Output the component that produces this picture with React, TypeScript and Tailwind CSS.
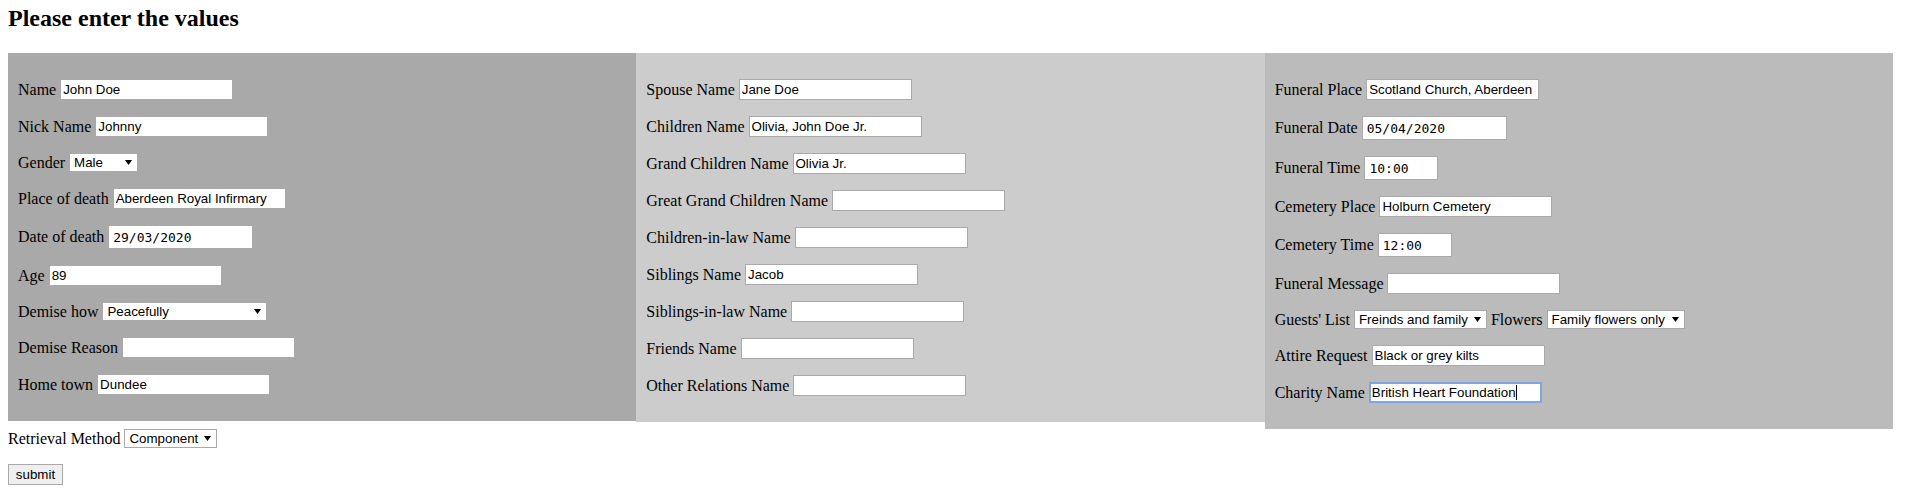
import React from 'react';

type Field =
  | { kind: 'text'; label: string; value?: string }
  | { kind: 'date'; label: string; value: string }
  | { kind: 'time'; label: string; value: string }
  | { kind: 'select'; label: string; value: string; w: string };

const sans = "font-['Liberation_Sans',Arial,sans-serif] text-[13.33px] text-black";
const mono = "font-['DejaVu_Sans_Mono','Liberation_Mono',monospace] text-[13px] text-black";
const box = 'border border-[#a9a9a9] bg-white outline-none';

function Select({ value, w, options }: { value: string; w: string; options?: string[] }) {
  const opts = options ?? [value];
  return (
    <span className="relative inline-flex">
      <select
        defaultValue={value}
        className={`${box} ${sans} ${w} h-[19px] appearance-none pl-[4px] pr-[16px] leading-[17px]`}
      >
        {opts.map((o) => (
          <option key={o}>{o}</option>
        ))}
      </select>
      <svg
        className="pointer-events-none absolute right-[6px] top-[7px]"
        width="7"
        height="5"
        viewBox="0 0 7 5"
      >
        <path d="M0 0H7L3.5 5Z" fill="#000" />
      </svg>
    </span>
  );
}

function Row({ field }: { field: Field }) {
  if (field.kind === 'select') {
    return (
      <div className="flex h-[19px] items-center gap-[4px]">
        <span>{field.label}</span>
        <Select value={field.value} w={field.w} />
      </div>
    );
  }
  if (field.kind === 'date' || field.kind === 'time') {
    return (
      <div className="flex h-[24px] items-center gap-[4px]">
        <span>{field.label}</span>
        <input
          type="text"
          defaultValue={field.value}
          className={`${box} ${mono} h-[24px] pl-[4px] ${field.kind === 'date' ? 'w-[145px]' : 'w-[74px]'}`}
        />
      </div>
    );
  }
  return (
    <div className="flex h-[21px] items-center gap-[4px]">
      <span>{field.label}</span>
      <input
        type="text"
        defaultValue={field.value ?? ''}
        className={`${box} ${sans} h-[21px] w-[173px] px-[2px]`}
      />
    </div>
  );
}

const personal: Field[] = [
  { kind: 'text', label: 'Name', value: 'John Doe' },
  { kind: 'text', label: 'Nick Name', value: 'Johnny' },
  { kind: 'select', label: 'Gender', value: 'Male', w: 'w-[69px]' },
  { kind: 'text', label: 'Place of death', value: 'Aberdeen Royal Infirmary' },
  { kind: 'date', label: 'Date of death', value: '29/03/2020' },
  { kind: 'text', label: 'Age', value: '89' },
  { kind: 'select', label: 'Demise how', value: 'Peacefully', w: 'w-[165px]' },
  { kind: 'text', label: 'Demise Reason' },
  { kind: 'text', label: 'Home town', value: 'Dundee' },
];

const family: Field[] = [
  { kind: 'text', label: 'Spouse Name', value: 'Jane Doe' },
  { kind: 'text', label: 'Children Name', value: 'Olivia, John Doe Jr.' },
  { kind: 'text', label: 'Grand Children Name', value: 'Olivia Jr.' },
  { kind: 'text', label: 'Great Grand Children Name' },
  { kind: 'text', label: 'Children-in-law Name' },
  { kind: 'text', label: 'Siblings Name', value: 'Jacob' },
  { kind: 'text', label: 'Siblings-in-law Name' },
  { kind: 'text', label: 'Friends Name' },
  { kind: 'text', label: 'Other Relations Name' },
];

const funeral: Field[] = [
  { kind: 'text', label: 'Funeral Place', value: 'Scotland Church, Aberdeen' },
  { kind: 'date', label: 'Funeral Date', value: '05/04/2020' },
  { kind: 'time', label: 'Funeral Time', value: '10:00' },
  { kind: 'text', label: 'Cemetery Place', value: 'Holburn Cemetery' },
  { kind: 'time', label: 'Cemetery Time', value: '12:00' },
  { kind: 'text', label: 'Funeral Message' },
];

export default function App() {
  return (
    <div className="px-[8px] font-['Liberation_Serif','Times_New_Roman',serif] text-[16px] text-black">
      <h2 className="mt-[5px] mb-[21px] text-[24px] font-bold leading-[27px]">Please enter the values</h2>

      <div className="flex items-start">
        {/* Deceased */}
        <div className="flex w-[33%] flex-col gap-4 bg-[#a9a9a9] px-[10px] py-[26px]">
          {personal.map((f) => (
            <Row key={f.label} field={f} />
          ))}
        </div>

        {/* Relations */}
        <div className="flex w-[33%] flex-col gap-4 bg-[#cccccc] px-[10px] py-[26px]">
          {family.map((f) => (
            <Row key={f.label} field={f} />
          ))}
        </div>

        {/* Funeral details */}
        <div className="flex w-[33%] flex-col gap-4 bg-[#bbbbbb] px-[10px] py-[26px]">
          {funeral.map((f) => (
            <Row key={f.label} field={f} />
          ))}
          <div className="flex h-[19px] items-center gap-[4px]">
            <span>Guests' List</span>
            <Select value="Freinds and family" w="w-[133px]" />
            <span>Flowers</span>
            <Select value="Family flowers only" w="w-[138px]" />
          </div>
          <Row field={{ kind: 'text', label: 'Attire Request', value: 'Black or grey kilts' }} />
          <div className="flex h-[21px] items-center gap-[4px]">
            <span>Charity Name</span>
            <div className={`${sans} flex h-[21px] w-[173px] items-center border-2 border-[#7ea5e6] bg-white px-[1px]`}>
              <span>British Heart Foundation</span>
              <span className="h-[15px] w-px bg-black" />
            </div>
          </div>
        </div>
      </div>

      <div className="flex h-[19px] items-center gap-[4px]">
        <span>Retrieval Method</span>
        <Select value="Component" w="w-[93px]" />
      </div>

      <button
        type="button"
        className={`${sans} mt-4 block h-[21px] w-[55px] border border-[#a9a9a9] bg-[#efefef]`}
      >
        submit
      </button>
    </div>
  );
}
